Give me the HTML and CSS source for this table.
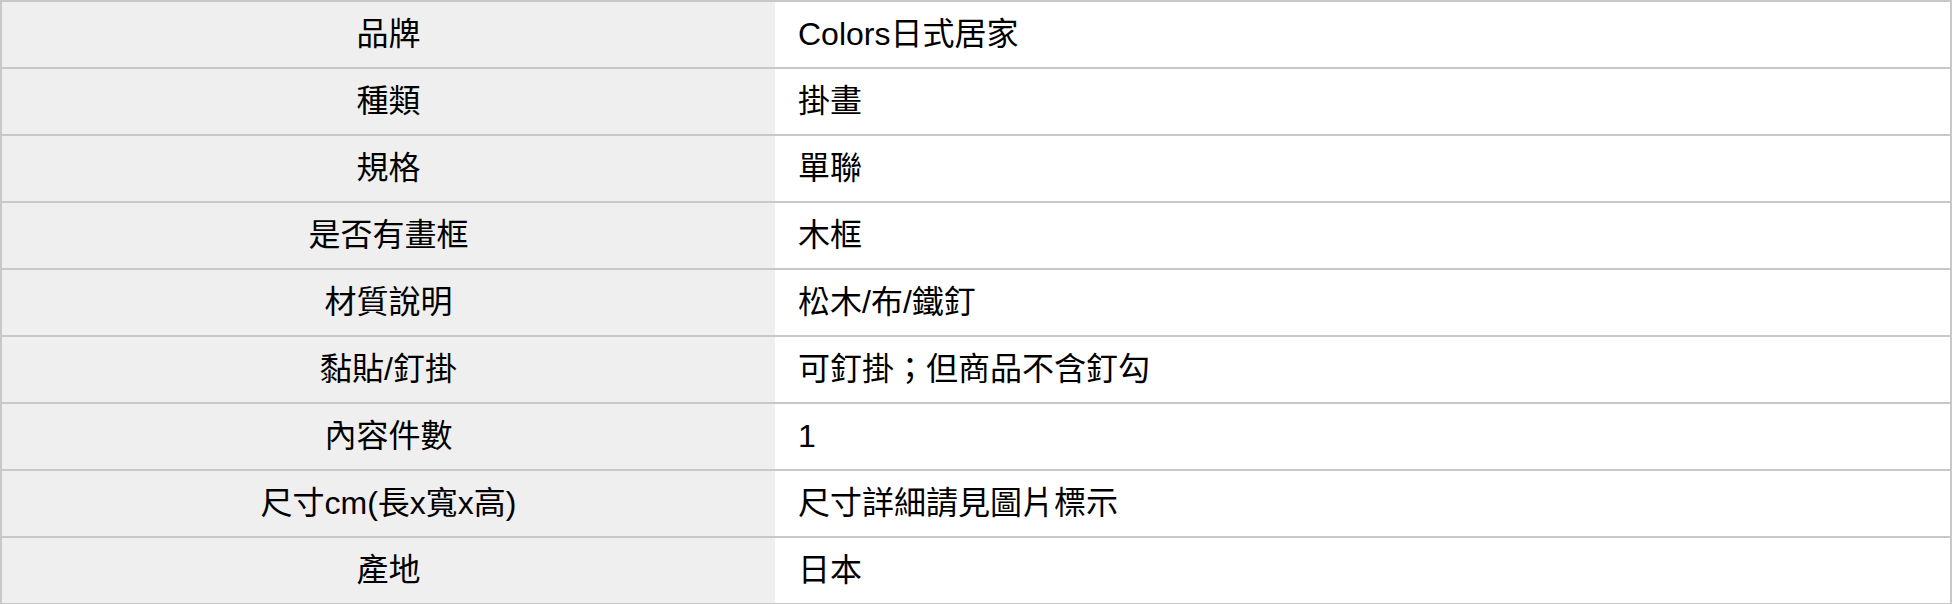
FILE: index.html
```
<!DOCTYPE html>
<html lang="zh-Hant">
<head>
<meta charset="utf-8">
<link rel="stylesheet" href="styles.css">
</head>
<body>
<table class="spec">
  <tbody>
    <tr><th>品牌</th><td>Colors日式居家</td></tr>
    <tr><th>種類</th><td>掛畫</td></tr>
    <tr><th>規格</th><td>單聯</td></tr>
    <tr><th>是否有畫框</th><td>木框</td></tr>
    <tr><th>材質說明</th><td>松木/布/鐵釘</td></tr>
    <tr><th>黏貼/釘掛</th><td>可釘掛；但商品不含釘勾</td></tr>
    <tr><th>內容件數</th><td>1</td></tr>
    <tr><th>尺寸cm(長x寬x高)</th><td>尺寸詳細請見圖片標示</td></tr>
    <tr><th>產地</th><td>日本</td></tr>
  </tbody>
</table>
</body>
</html>
```
FILE: styles.css
```
html, body {
  margin: 0;
  padding: 0;
  background: #ffffff;
}
.spec {
  border-collapse: collapse;
  width: 1952px;
  table-layout: fixed;
  font-family: "Liberation Sans", "Noto Sans CJK TC", sans-serif;
  font-size: 32px;
  color: #000;
}
.spec tr {
  height: 67px;
}
.spec th, .spec td {
  border-top: 2px solid #c8c8c8;
  border-bottom: 2px solid #c8c8c8;
  padding: 0;
  line-height: 1.2;
  vertical-align: middle;
}
.spec th {
  width: 774px;
  box-sizing: border-box;
  background: #efefef;
  font-weight: normal;
  text-align: center;
  border-left: 2px solid #c8c8c8;
}
.spec td {
  background: #ffffff;
  text-align: left;
  padding-left: 23px;
  border-right: 2px solid #c8c8c8;
}
```
